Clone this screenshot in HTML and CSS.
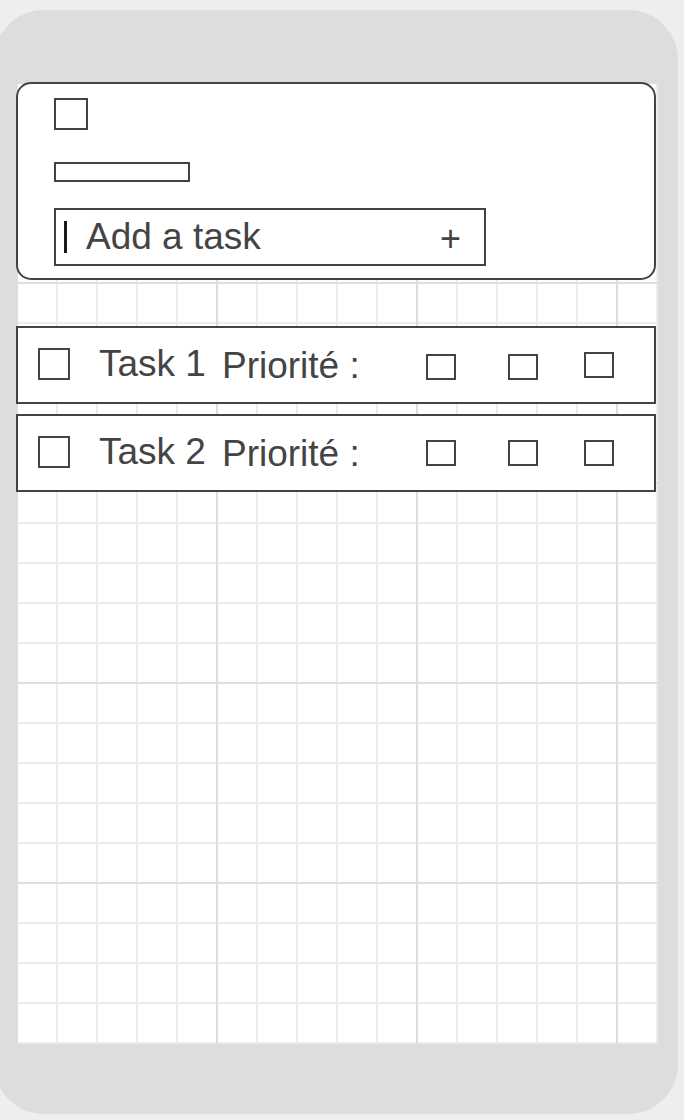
FILE: index.html
```html
<!DOCTYPE html>
<html lang="fr">
<head>
<meta charset="utf-8">
<title>Todo</title>
<link rel="stylesheet" href="styles.css">
</head>
<body>
<div class="device">
  <div class="screen">
    <div class="header-card">
      <div class="box box-lg"></div>
      <div class="title-bar"></div>
      <div class="task-input">
        <span class="caret"></span>
        <span class="placeholder">Add a task</span>
        <span class="add-btn">+</span>
      </div>
    </div>
    <ul class="task-list">
      <li class="task-row task-row-1">
        <span class="box check"></span>
        <span class="task-name">Task 1</span>
        <span class="priority-label">Priorité :</span>
        <span class="box prio prio-a"></span>
        <span class="box prio prio-b"></span>
        <span class="box prio prio-c"></span>
      </li>
      <li class="task-row task-row-2">
        <span class="box check"></span>
        <span class="task-name">Task 2</span>
        <span class="priority-label">Priorité :</span>
        <span class="box prio prio-a"></span>
        <span class="box prio prio-b"></span>
        <span class="box prio prio-c"></span>
      </li>
    </ul>
  </div>
</div>
</body>
</html>
```

FILE: styles.css
```css
html, body {
  margin: 0;
  padding: 0;
}

body {
  background: #eeeeee;
  font-family: "Liberation Sans", Arial, sans-serif;
  color: #444444;
  overflow: hidden;
}

.device {
  box-sizing: border-box;
  width: 684px;
  height: 1104px;
  margin: 10px 0 0 -6px;
  padding: 72px 0 0 22px;
  background: #dddddd;
  border-radius: 50px;
}

.screen {
  width: 642px;
  height: 962px;
  background-color: #ffffff;
  background-image:
    linear-gradient(to right, #dedede 0, #dedede 2px, transparent 2px),
    linear-gradient(to bottom, #dedede 0, #dedede 2px, transparent 2px),
    linear-gradient(to right, #ececec 0, #ececec 2px, transparent 2px),
    linear-gradient(to bottom, #ececec 0, #ececec 2px, transparent 2px);
  background-size: 200px 100%, 100% 200px, 40px 100%, 100% 40px;
  background-repeat: repeat-x, repeat-y, repeat-x, repeat-y;
}

.box {
  box-sizing: border-box;
  display: block;
  border: 2px solid #444444;
  background: #ffffff;
}

/* Header card */
.header-card {
  box-sizing: border-box;
  width: 640px;
  height: 198px;
  border: 2px solid #444444;
  border-radius: 15px;
  background: #ffffff;
  padding: 14px 0 0 36px;
  display: flex;
  flex-direction: column;
  align-items: flex-start;
}

.box-lg {
  width: 34px;
  height: 32px;
}

.title-bar {
  box-sizing: border-box;
  width: 136px;
  height: 20px;
  margin-top: 32px;
  border: 2px solid #444444;
}

.task-input {
  box-sizing: border-box;
  width: 432px;
  height: 58px;
  margin-top: 26px;
  border: 2px solid #444444;
  display: flex;
  align-items: flex-start;
}

.caret {
  display: block;
  width: 3px;
  height: 32px;
  margin: 11px 0 0 8px;
  background: #1a1a1a;
}

.placeholder {
  font-size: 37px;
  line-height: 36px;
  margin: 9px 0 0 19px;
}

.add-btn {
  font-size: 36px;
  line-height: 36px;
  margin: 11px 23px 0 auto;
}

/* Task list */
.task-list {
  list-style: none;
  margin: 46px 0 0 0;
  padding: 0;
  display: flex;
  flex-direction: column;
  gap: 10px;
}

.task-row {
  box-sizing: border-box;
  width: 640px;
  height: 78px;
  border: 2px solid #444444;
  background: #ffffff;
  padding-left: 20px;
  display: grid;
  grid-template-columns: 61px 123px 204px 82px 76px 30px;
  align-items: start;
}

.check {
  width: 32px;
  height: 32px;
  margin-top: 20px;
}

.task-name,
.priority-label {
  font-size: 37px;
  line-height: 36px;
  white-space: nowrap;
}

.task-name {
  margin-top: 18px;
}

.priority-label {
  margin-top: 20px;
}

.prio {
  width: 30px;
  height: 26px;
  margin-top: 24px;
}

.task-row-1 .prio-a,
.task-row-1 .prio-b {
  margin-top: 26px;
}
```
